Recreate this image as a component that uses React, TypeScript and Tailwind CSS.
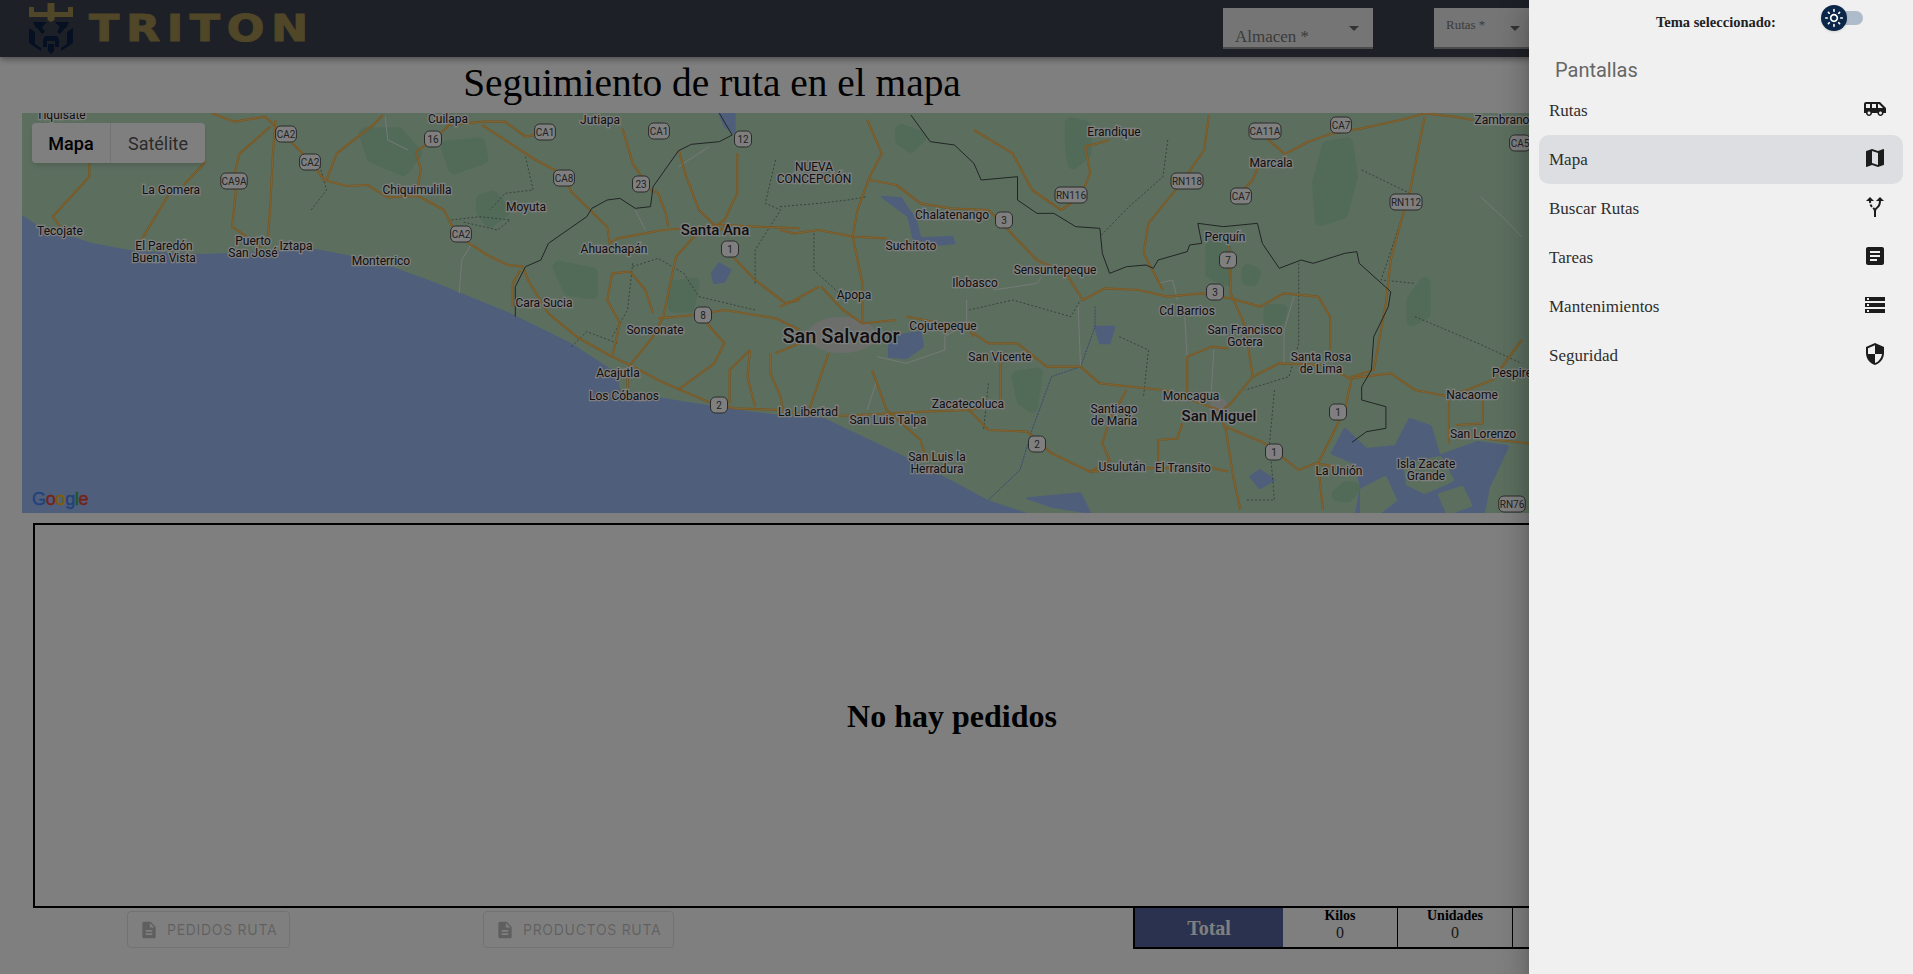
import {
  MdAirportShuttle,
  MdAltRoute,
  MdArrowDropDown,
  MdArticle,
  MdDescription,
  MdMap,
  MdOutlineLightMode,
  MdSecurity,
  MdStorage,
} from "react-icons/md";

type Pt = [number, number];

// map traced from two crops of the picture, each with its own scale
const fromLeft = ([x, y]: Pt): Pt => [x / 1.96, y / 3 + 110];
const fromRight = ([x, y]: Pt): Pt => [x / 2.063 + 780, y / 3 + 110];

const parse = (s: string): Pt[] =>
  s
    .trim()
    .split(/\s+/)
    .map((p) => p.split(",").map(Number) as Pt);

const toPoints = (pts: Pt[]) => pts.map((p) => p.join(",")).join(" ");
const left = (s: string) => toPoints(parse(s).map(fromLeft));
const right = (s: string) => toPoints(parse(s).map(fromRight));

const sea =
  "22,215 37,225 92,243 135,251 204,254 316,249 352,256 393,267 434,282 510,313 571,343 617,373 620,390 658,397 694,403 740,410 780,415 824,418 860,435 906,457 964,487 988,500 1027,513 22,513";

const gulf =
  "1345,430 1333,453 1356,463 1362,487 1357,513 1483,513 1488,487 1507,447 1478,443 1439,457 1430,427 1410,420 1396,447 1366,450";

const islands = [
  "1405,465 1440,458 1452,480 1425,492 1408,484",
  "1362,490 1385,478 1395,500 1378,513 1362,513",
  "1440,495 1462,488 1470,505 1448,513",
];

const roadsLeft = [
  "415,10 460,35 520,20 560,80 610,155 635,210 680,228 720,225 760,262 820,258 870,300 885,345 905,385 955,435 995,465 1025,470 1035,510 1075,610 1130,680 1200,740 1235,765 1290,810 1330,838 1395,880 1440,895 1530,900",
  "945,35 990,35 1030,80 1068,70",
  "945,45 1000,100 1050,150 1105,195 1120,245 1150,290 1190,350 1195,400 1210,385 1300,360 1420,345 1480,350 1568,355",
  "640,210 660,130 735,40 750,15",
  "815,125 825,180 815,260",
  "815,125 850,90 880,45 945,35",
  "540,30 535,130 530,280 525,390 510,410 455,350 462,250 460,190 470,130 530,50",
  "175,160 175,200 103,320 118,350",
  "330,255 275,395",
  "400,50 400,160 360,225",
  "1330,120 1345,200 1370,300 1400,345",
  "1445,130 1445,250 1420,330 1400,350",
  "1220,55 1240,160 1275,240 1290,250 1305,310 1310,350",
  "1420,355 1360,380 1325,440 1300,620 1280,680 1235,765",
  "1430,430 1480,510 1540,580 1568,570",
  "1290,625 1360,615 1420,600 1480,615 1520,625 1568,660",
  "1380,630 1420,700 1400,760 1330,838",
  "1200,490 1235,485 1265,540 1280,610",
  "1200,490 1190,570 1215,640 1200,740",
  "1470,720 1430,780 1430,880",
  "1510,730 1510,790 1530,860 1535,900",
  "1470,720 1465,800 1480,890",
  "1520,730 1568,700",
  "1230,770 1230,860",
  "1020,480 1005,520 1005,590",
];

const roadsRight = [
  "0,360 30,370 80,360 150,380 220,385",
  "150,380 160,300 185,200 210,130 180,30",
  "185,210 240,225 290,280 350,295 430,300 465,350 490,390 530,450 590,490 625,570 670,535 740,540 800,560 870,550 930,565 990,590 1040,550 1110,560 1135,620 1135,720",
  "400,60 480,130 520,240 580,300 620,260 640,190 630,110 680,90",
  "885,15 875,120 830,215 760,340 750,430 790,540",
  "1000,80 1040,130 1040,170 990,160 975,210 950,250",
  "1045,130 1090,95 1140,70 1200,55 1280,30 1330,10",
  "1330,20 1300,240 1280,340 1260,450 1250,580 1225,780 1180,800 1165,900 1110,1060 1120,1200",
  "925,400 930,550 960,650 975,800 930,880 905,910 920,960 935,1100 950,1200",
  "620,770 660,820 790,840 850,870 905,900",
  "0,905 120,918 300,905 390,900 430,960 510,965 560,1030 640,1085 760,1075 880,1070 925,1085",
  "400,670 430,700 490,700 550,770 620,770",
  "260,620 300,630 390,660 400,680",
  "80,530 30,570 0,590",
  "85,530 130,600 170,640 240,630",
  "920,950 1000,1000 1070,1080 1105,1060 1190,1080",
  "975,800 1030,760 1120,765 1175,805 1260,790 1310,840 1380,860 1470,810 1530,690",
  "1380,860 1380,950 1380,1000",
  "1395,945 1450,940 1450,860",
  "1450,985 1545,1000",
  "840,740 890,710 925,715",
  "840,740 840,850",
  "715,840 680,930 665,1000 680,1050 640,1085",
  "780,1075 780,990 820,985 830,940",
  "455,745 455,880 390,900",
  "190,780 220,900 290,990 300,1040",
  "100,730 60,900",
  "150,380 170,520 170,640",
  "1430,30 1390,20 1330,10",
];

const minorLeft = ["755,20 760,90 800,120", "1245,300 1265,360", "1330,170 1390,110", "925,400 905,450 900,550"];

const minorRight = [
  "440,540 530,520 540,500",
  "385,570 385,640 340,680 340,720 260,760 200,740",
  "615,590 620,770",
  "835,620 840,740",
  "895,720 890,840",
  "1060,560 1040,660 1040,760",
  "1445,260 1490,320 1530,380",
  "200,810 180,900",
  "780,520 810,510 820,570",
];

const borderLeft =
  "1410,10 1435,75 1410,95 1355,103 1330,122 1280,230 1275,290 1245,295 1215,265 1190,270 1160,295 1150,320 1075,400 1060,450 1030,470 1010,530 1010,620";

const borderRight =
  "270,15 310,95 360,105 400,160 415,210 490,200 490,270 530,310 565,310 610,350 660,355 665,430 680,490 715,470 755,465 770,475 780,450 840,425 845,405 870,400 862,340 915,350 985,340 995,400 1030,475 1075,450 1100,460 1165,430 1190,425 1195,460 1260,545 1255,590 1225,680 1220,780 1200,830 1200,870 1250,890 1250,955 1210,965 1180,997";

const dashedRight = [
  "0,290 80,280 140,270 180,260",
  "70,370 70,480 130,560",
  "390,600 480,570 600,620 620,570",
  "700,680 760,720 750,860",
  "1070,460 1070,700 1050,800 960,840",
  "1200,180 1300,250 1240,510 1310,520",
  "1310,620 1440,700 1530,760",
  "800,90 790,200 720,290 660,380",
  "1020,840 1010,1000 1020,1170 960,1170",
  "430,820 420,960",
];

const dashedLeft = [
  "610,300 640,240 620,130",
  "885,330 940,320 1000,330 975,360 905,335",
  "1030,140 1045,240 990,250 960,300",
  "1240,470 1290,445 1340,490 1370,560 1480,600",
  "1240,460 1230,600 1200,680",
  "1520,150 1500,280 1530,300 1480,420 1480,520",
  "1120,710 1150,665 1210,700",
];

const lakes = [
  right("210,260 250,265 280,330 290,385 355,380 360,400 320,405 275,385 265,320"),
  right("225,680 290,665 295,710 260,745 225,740"),
  right("650,650 690,650 680,700 660,700"),
  right("970,1100 990,1080 1020,1110 990,1135"),
  right("510,1165 620,1150 640,1209 560,1190"),
  left("1395,490 1410,460 1432,480 1420,515 1400,520"),
  left("1410,10 1440,10 1440,70 1420,50"),
];

// darker woodland, kept as rough patches
const forests = [
  right("1130,110 1170,100 1180,200 1160,310 1115,330 1110,220"),
  right("490,800 530,790 520,890 500,870"),
  right("1010,600 1035,600 1030,630 1010,640"),
  right("890,410 920,420 920,510 890,490"),
  right("965,480 980,490 975,510 965,510"),
  right("600,40 630,50 630,130 605,160 600,110"),
  right("250,60 290,80 270,110 250,90"),
  right("1305,570 1330,520 1330,610 1305,630"),
  right("1170,1130 1185,1135 1170,1160 1150,1155"),
  left("715,70 780,70 815,130 790,180 730,140"),
  left("875,110 940,100 945,145 890,175"),
  left("945,270 965,260 990,300 960,335 945,305"),
  left("1095,470 1160,490 1160,550 1115,540"),
  left("1320,530 1360,520 1350,590 1320,590"),
];

const labels: [string, number, number, number?, number?][] = [
  ["Tiquisate", 61, 115],
  ["Cuilapa", 448, 119],
  ["Jutiapa", 600, 120],
  ["La Gomera", 171, 190],
  ["Chiquimulilla", 417, 190],
  ["Moyuta", 526, 207],
  ["Tecojate", 60, 231],
  ["El Paredón", 164, 246],
  ["Buena Vista", 164, 258],
  ["Puerto", 253, 241],
  ["San José", 253, 253],
  ["Iztapa", 296, 246],
  ["Monterrico", 381, 261],
  ["Santa Ana", 715, 230, 15, 500],
  ["Ahuachapán", 614, 249],
  ["Cara Sucia", 544, 303],
  ["Sonsonate", 655, 330],
  ["Acajutla", 618, 373],
  ["Los Cóbanos", 624, 396],
  ["NUEVA", 814, 167],
  ["CONCEPCIÓN", 814, 179],
  ["Erandique", 1114, 132],
  ["Marcala", 1271, 163],
  ["Chalatenango", 952, 215],
  ["Suchitoto", 911, 246],
  ["Ilobasco", 975, 283],
  ["Sensuntepeque", 1055, 270],
  ["Perquín", 1225, 237],
  ["Apopa", 854, 295],
  ["San Salvador", 841, 336, 20, 500],
  ["Cojutepeque", 943, 326],
  ["Cd Barrios", 1187, 311],
  ["San Francisco", 1245, 330],
  ["Gotera", 1245, 342],
  ["San Vicente", 1000, 357],
  ["Santa Rosa", 1321, 357],
  ["de Lima", 1321, 369],
  ["Pespire", 1512, 373],
  ["Nacaome", 1472, 395],
  ["Moncagua", 1191, 396],
  ["San Miguel", 1219, 416, 15, 500],
  ["Zacatecoluca", 968, 404],
  ["La Libertad", 808, 412],
  ["San Luis Talpa", 888, 420],
  ["Santiago", 1114, 409],
  ["de María", 1114, 421],
  ["San Lorenzo", 1483, 434],
  ["San Luis la", 937, 457],
  ["Herradura", 937, 469],
  ["Usulután", 1122, 467],
  ["El Transito", 1183, 468],
  ["La Unión", 1339, 471],
  ["Isla Zacate", 1426, 464],
  ["Grande", 1426, 476],
  ["Zambrano", 1502, 120],
];

const shields: [string, number, number][] = [
  ["CA2", 286, 134],
  ["CA2", 310, 162],
  ["CA9A", 234, 181],
  ["16", 433, 139],
  ["CA1", 545, 132],
  ["CA1", 659, 131],
  ["12", 743, 139],
  ["23", 641, 184],
  ["CA8", 564, 178],
  ["CA2", 461, 234],
  ["1", 730, 249],
  ["8", 703, 315],
  ["2", 719, 405],
  ["CA11A", 1265, 131],
  ["CA7", 1341, 125],
  ["RN118", 1187, 181],
  ["RN116", 1071, 195],
  ["CA7", 1241, 196],
  ["RN112", 1406, 202],
  ["3", 1004, 220],
  ["7", 1228, 260],
  ["3", 1215, 292],
  ["1", 1338, 412],
  ["2", 1037, 444],
  ["1", 1274, 452],
  ["RN76", 1512, 504],
  ["CA5", 1520, 143],
];

const screens = [
  { name: "Rutas", icon: MdAirportShuttle },
  { name: "Mapa", icon: MdMap, active: true },
  { name: "Buscar Rutas", icon: MdAltRoute },
  { name: "Tareas", icon: MdArticle },
  { name: "Mantenimientos", icon: MdStorage },
  { name: "Seguridad", icon: MdSecurity },
];

const TritonLogo = () => (
  <svg width="46" height="52" viewBox="0 0 46 52" className="shrink-0">
    <path
      d="M19.500 0h7v9H40V4h5v10H26.500v3l-3.500 2-3.500-2v-3H1V4h5v5h13.500z"
      fill="#a08c50"
    />
    <g fill="#0a2344">
      <path d="M5 19h14l-5 5 3 5-3 2-5-6H8z" />
      <path d="M41 19H27l5 5-3 5 3 2 5-6h1z" />
      <path d="M1 25l6 4v12l6 4v3L1 40z" />
      <path d="M45 25l-6 4v12l-6 4v3l12-8z" />
      <path d="M17 33h12l2 4v7h-4v-6h-8v6h-4v-7z" />
      <path d="M20 41h6v7l-3 3-3-3z" />
    </g>
  </svg>
);

const MapView = () => (
  <div className="relative mx-[22px] h-[400px] overflow-hidden bg-[#b8debf]">
    <svg viewBox="22 113 1869 400" className="block h-full w-full">
      {forests.map((p, i) => (
        <polygon key={i} points={p} fill="#a3d6b1" stroke="#a3d6b1" strokeWidth="12" strokeLinejoin="round" />
      ))}
      <ellipse cx="842" cy="335" rx="34" ry="18" fill="#d8dcd6" />
      <ellipse cx="1219" cy="410" rx="10" ry="12" fill="#d8dcd6" />
      <polygon points={sea} fill="#9fbdf5" />
      <polygon points={gulf} fill="#9fbdf5" stroke="#9fbdf5" strokeWidth="4" strokeLinejoin="round" />
      {islands.map((p, i) => (
        <polygon key={i} points={p} fill="#b8debf" stroke="#b8debf" strokeWidth="4" strokeLinejoin="round" />
      ))}
      {lakes.map((p, i) => (
        <polygon key={i} points={p} fill="#9fbdf5" stroke="#9fbdf5" strokeWidth="2" strokeLinejoin="round" />
      ))}
      <polyline
        points={right("650,590 650,650 620,770 560,800 520,960 495,1080 430,1170")}
        fill="none"
        stroke="#6f92de"
        strokeWidth="1"
        strokeDasharray="2 1"
      />
      {dashedRight.map((p, i) => (
        <polyline key={i} points={right(p)} fill="none" stroke="#5f6b62" strokeWidth="0.8" strokeDasharray="2 2" />
      ))}
      {dashedLeft.map((p, i) => (
        <polyline key={i} points={left(p)} fill="none" stroke="#5f6b62" strokeWidth="0.8" strokeDasharray="2 2" />
      ))}
      {minorLeft.map((p, i) => (
        <polyline key={i} points={left(p)} fill="none" stroke="#eef2ee" strokeWidth="1" />
      ))}
      {minorRight.map((p, i) => (
        <polyline key={i} points={right(p)} fill="none" stroke="#eef2ee" strokeWidth="1" />
      ))}
      {roadsLeft.map((p, i) => (
        <g key={i}>
          <polyline points={left(p)} fill="none" stroke="#f0a83a" strokeWidth="2.2" strokeLinejoin="round" />
          <polyline points={left(p)} fill="none" stroke="#ffd98c" strokeWidth="0.7" strokeLinejoin="round" />
        </g>
      ))}
      {roadsRight.map((p, i) => (
        <g key={i}>
          <polyline points={right(p)} fill="none" stroke="#f0a83a" strokeWidth="2.2" strokeLinejoin="round" />
          <polyline points={right(p)} fill="none" stroke="#ffd98c" strokeWidth="0.7" strokeLinejoin="round" />
        </g>
      ))}
      <polyline points={left(borderLeft)} fill="none" stroke="#44494a" strokeWidth="1" />
      <polyline points={right(borderRight)} fill="none" stroke="#44494a" strokeWidth="1" />
      {shields.map(([text, x, y], i) => {
        const w = Math.max(17, text.length * 5.6 + 4);
        return (
          <g key={i}>
            <rect x={x - w / 2} y={y - 8} width={w} height={16} rx={5} fill="#ffffff" stroke="#555555" strokeWidth="1" />
            <text
              x={x}
              y={y + 0.5}
              textAnchor="middle"
              dominantBaseline="central"
              className="fill-[#444444] font-['Roboto',sans-serif] text-[10px]"
            >
              {text}
            </text>
          </g>
        );
      })}
      {labels.map(([text, x, y, size = 12, weight = 400], i) => (
        <text
          key={i}
          x={x}
          y={y}
          textAnchor="middle"
          dominantBaseline="central"
          fontSize={size}
          fontWeight={weight}
          stroke="#ffffff"
          strokeWidth="2.5"
          className="fill-[#222222] font-['Roboto',sans-serif] [paint-order:stroke]"
        >
          {text}
        </text>
      ))}
    </svg>

    {/* map type control */}
    <div className="absolute left-[10px] top-[10px] flex h-10 rounded-sm bg-white font-['Roboto',sans-serif] text-[18px] shadow-md">
      <div className="flex w-[79px] items-center justify-center border-r border-[#e6e6e6] font-medium text-black">
        Mapa
      </div>
      <div className="flex w-[94px] items-center justify-center text-[#565656]">
        Satélite
      </div>
    </div>

    {/* google mark */}
    <div className="absolute bottom-[2px] left-[10px] font-['Liberation_Sans',sans-serif] text-[18px] leading-6 tracking-[-0.3px] [-webkit-text-stroke:0.4px]">
      <span className="text-[#4285f4]">G</span>
      <span className="text-[#ea4335]">o</span>
      <span className="text-[#fbbc05]">o</span>
      <span className="text-[#4285f4]">g</span>
      <span className="text-[#34a853]">l</span>
      <span className="text-[#ea4335]">e</span>
    </div>
  </div>
);

const ActionButton = ({ label, width, margin }: { label: string; width: string; margin: string }) => (
  <button
    disabled
    className={`flex h-[37px] shrink-0 items-center rounded border border-black/10 pl-[11px] font-['Inter',sans-serif] text-[14px] tracking-[0.7px] text-black/25 ${width} ${margin}`}
  >
    <MdDescription size={20} className="mr-2 shrink-0" />
    {label}
  </button>
);

const TotalCell = ({ title, last }: { title: string; last?: boolean }) => (
  <div className={`flex w-[115px] shrink-0 flex-col items-center border-black ${last ? "" : "border-r"}`}>
    <span className="-mt-px text-[14px] font-bold leading-[17px]">{title}</span>
    <span className="text-[16px] leading-[18px] text-[#333]">0</span>
  </div>
);

const App = () => {
  return (
    <div className="relative h-[974px] w-full overflow-hidden bg-white font-['Liberation_Serif',serif] text-black">
      {/* top bar */}
      <header className="relative z-10 flex h-[57px] items-center bg-[#3a404c] pl-[28px] shadow-[0_2px_4px_-1px_rgba(0,0,0,0.2),0_4px_5px_0_rgba(0,0,0,0.14),0_1px_10px_0_rgba(0,0,0,0.12)]">
        <TritonLogo />
        <span className="ml-[15px] origin-left scale-x-[1.2] font-['DejaVu_Sans',sans-serif] text-[37px] font-bold leading-none tracking-[5.5px] text-[#a08c50] [-webkit-text-stroke:1px_#a08c50]">
          TRITON
        </span>
        <div className="ml-auto mr-[329px] flex gap-[61px]">
          <div className="flex h-[41px] w-[150px] justify-between border-b-2 border-[#999] bg-[#ebebeb] pl-3 pr-[7px] text-[17px] text-[#777]">
            <span className="mt-[17px] leading-6">Almacen *</span>
            <MdArrowDropDown size={24} className="mt-[8px] text-[#666]" />
          </div>
          <div className="flex h-[41px] w-[150px] border-b-2 border-[#999] bg-[#ebebeb] pl-3 text-[13px] text-[#777]">
            <span className="mt-[9px] w-[57px] leading-4">Rutas *</span>
            <MdArrowDropDown size={24} className="mt-[8px] text-[#666]" />
          </div>
        </div>
      </header>

      {/* page */}
      <main>
        <h1 className="flex h-[56px] w-[1424px] items-center justify-center pb-[3px] text-[39.4px] font-normal">
          Seguimiento de ruta en el mapa
        </h1>
        <MapView />
        <div className="ml-[33px] mt-[10px] flex h-[385px] w-[1838px] items-center justify-center border-2 border-black">
          <h2 className="text-[32px] font-bold">No hay pedidos</h2>
        </div>
        <div className="-mt-[2px] flex items-start">
          <ActionButton label="PEDIDOS RUTA" width="w-[163px]" margin="ml-[127px] mt-[5px]" />
          <ActionButton label="PRODUCTOS RUTA" width="w-[191px]" margin="ml-[193px] mt-[5px]" />
          <div className="ml-[459px] flex h-[43px] border-2 border-black">
            <div className="flex w-[148px] shrink-0 items-center justify-center bg-[#55649e] text-[20px] font-bold text-white">
              Total
            </div>
            <TotalCell title="Kilos" />
            <TotalCell title="Unidades" />
            <TotalCell title="Pedidos" />
            <TotalCell title="Clientes" last />
          </div>
        </div>
      </main>

      {/* backdrop */}
      <div className="absolute inset-0 z-20 bg-black/50" />

      {/* side drawer */}
      <aside className="absolute bottom-0 right-0 top-0 z-30 w-[384px] bg-[#f0f0f0] shadow-[0_8px_10px_-5px_rgba(0,0,0,0.2),0_16px_24px_2px_rgba(0,0,0,0.14),0_6px_30px_5px_rgba(0,0,0,0.12)]">
        <div className="mt-[5px] flex h-[26px] items-start pl-[127px]">
          <span className="mt-[8px] w-[165px] text-[14.5px] font-bold leading-[18px] text-[#222]">
            Tema seleccionado:
          </span>
          <div className="relative ml-[13px] mt-[6px] h-[14px] w-[29px] rounded-full bg-[#aebbcb]">
            <div className="absolute -left-[13px] -top-[6px] flex h-[26px] w-[26px] items-center justify-center rounded-full bg-[#0a2648] text-white shadow">
              <MdOutlineLightMode size={20} />
            </div>
          </div>
        </div>
        <h3 className="ml-[26px] mt-[25px] font-['Roboto',sans-serif] text-[20px] font-normal leading-7 text-[#666]">
          Pantallas
        </h3>
        <ul className="mx-[10px] mt-[2px]">
          {screens.map(({ name, icon: Icon, active }) => (
            <li
              key={name}
              className={`flex h-[49px] items-center justify-between rounded-[10px] pl-[10px] pr-[16px] text-[17px] text-[#2e2e2e] ${active ? "bg-[#dddee2]" : ""}`}
            >
              <span>{name}</span>
              <Icon size={24} className="-mt-1 text-[#1c1c1c]" />
            </li>
          ))}
        </ul>
      </aside>
    </div>
  );
};

export default App;
